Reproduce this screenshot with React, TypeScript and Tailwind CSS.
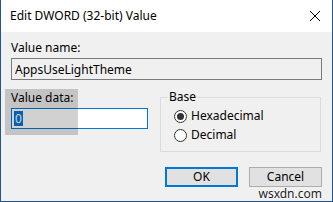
import React from "react";

function Radio({ checked, label }: { checked?: boolean; label: string }) {
  return (
    <div className="flex items-center h-[16px]">
      <span className="w-[13px] h-[13px] rounded-full border border-[#333333] bg-white flex items-center justify-center">
        {checked && <span className="w-[7px] h-[7px] rounded-full bg-[#333333]" />}
      </span>
      <span className="ml-[4px] leading-[16px]">{label}</span>
    </div>
  );
}

export default function App() {
  return (
    <div
      className="relative w-[333px] h-[202px] bg-[#f0f0f0] border-l border-r border-b border-[#24558f] flex flex-col text-[12px] text-black overflow-hidden"
      style={{ fontFamily: '"Noto Sans", "Open Sans", Arial, sans-serif' }}
    >
      <div className="h-[32px] bg-white flex items-center justify-between pl-[9px] pr-[10px]">
        <span className="leading-[16px]">Edit DWORD (32-bit) Value</span>
        <svg width="12" height="12" viewBox="0 0 12 12" className="mr-[1px]">
          <path d="M1 1 L11 11 M11 1 L1 11" stroke="#000" strokeWidth="1" fill="none" />
        </svg>
      </div>

      <div className="flex flex-col px-[10px] pt-[8px]">
        <div className="leading-[15px]">Value name:</div>
        <div className="mt-[3px] h-[22px] border border-[#7a7a7a] bg-[#f0f0f0] flex items-center px-[3px]">
          <span className="leading-[15px]">AppsUseLightTheme</span>
        </div>

        <div className="mt-[10px] flex">
          <div className="w-[149px] shrink-0 flex flex-col">
            <div className="leading-[15px]">Value data:</div>
            <div className="mt-[3px] w-[137px] h-[21px] border border-[#0078d7] bg-white flex items-center px-[2px]">
              <span className="leading-[15px] bg-[#0078d7] text-white px-[1px]">0</span>
            </div>
          </div>
          <fieldset className="min-w-0 w-[161px] h-[62px] border border-[#dcdcdc] px-[14px] pb-[8px]">
            <legend className="leading-[14px] px-[1px] -ml-[7px]">Base</legend>
            <div className="mt-[4px] flex flex-col gap-[3px] -ml-[1px]">
              <Radio checked label="Hexadecimal" />
              <Radio label="Decimal" />
            </div>
          </fieldset>
        </div>

        <div className="mt-[15px] flex flex-row items-center pl-[154px]">
          <div className="w-[73px] h-[20px] border-2 border-[#0078d7] bg-[#e1e1e1] flex items-center justify-center leading-[14px]">
            OK
          </div>
          <div className="ml-[11px] w-[73px] h-[20px] border border-[#adadad] bg-[#e1e1e1] flex items-center justify-center leading-[14px] text-black">
            Cancel
          </div>
        </div>
      </div>

      <div className="absolute left-[4px] top-[89px] w-[73px] h-[46px] bg-black/[0.18]" />

      <div className="absolute right-[10px] bottom-0 text-[12px] leading-[14px] text-[#222] [text-shadow:0_0_2px_#fff,0_0_2px_#fff]">
        wsxdn.com
      </div>
    </div>
  );
}
